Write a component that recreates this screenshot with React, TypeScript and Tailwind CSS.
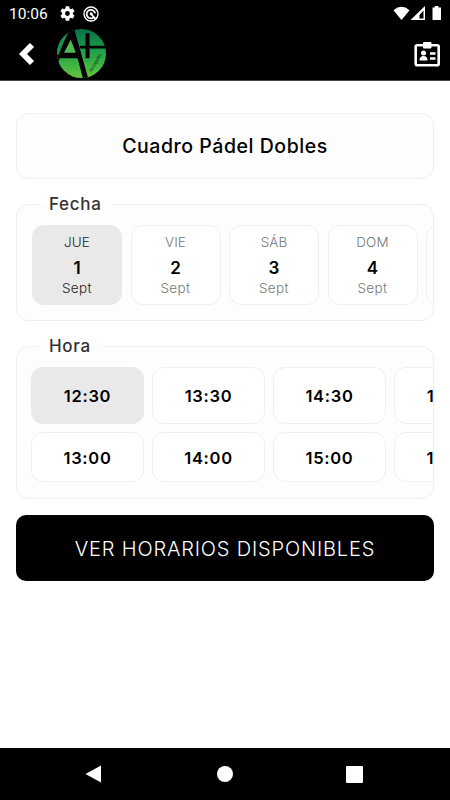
import type { ReactNode } from "react";
import clsx from "clsx";

interface IDay {
    name: string;
    day: number | string;
    month: string;
}

const days: IDay[] = [
    { name: "JUE", day: 1, month: "Sept" },
    { name: "VIE", day: 2, month: "Sept" },
    { name: "SÁB", day: 3, month: "Sept" },
    { name: "DOM", day: 4, month: "Sept" },
    { name: "", day: "", month: "" },
];

const hours = [
    ["12:30", "13:30", "14:30", "15:30"],
    ["13:00", "14:00", "15:00", "16:00"],
];

function StatusBar() {
    return (
        <div className="flex h-[27px] items-center justify-between pl-[9px] pr-[8px]">
            <div className="flex items-center">
                <span className="w-[51px] pt-[2px] font-[Roboto] text-[15.5px] leading-none">10:06</span>
                <svg width="15" height="15" viewBox="2 2 20 20" fill="currentColor">
                    <path d="M19.14 12.94c.04-.3.06-.61.06-.94 0-.32-.02-.64-.07-.94l2.03-1.58a.49.49 0 0 0 .12-.61l-1.92-3.32a.488.488 0 0 0-.59-.22l-2.39.96c-.5-.38-1.03-.7-1.62-.94l-.36-2.54a.484.484 0 0 0-.48-.41h-3.84c-.24 0-.43.17-.47.41l-.36 2.54c-.59.24-1.13.57-1.62.94l-2.39-.96c-.22-.08-.47 0-.59.22L2.74 8.87c-.12.21-.08.47.12.61l2.03 1.58c-.05.3-.09.63-.09.94s.02.64.07.94l-2.03 1.58a.49.49 0 0 0-.12.61l1.92 3.32c.12.22.37.29.59.22l2.39-.96c.5.38 1.03.7 1.62.94l.36 2.54c.05.24.24.41.48.41h3.84c.24 0 .44-.17.47-.41l.36-2.54c.59-.24 1.13-.56 1.62-.94l2.39.96c.22.08.47 0 .59-.22l1.92-3.32c.12-.22.07-.47-.12-.61l-2.01-1.58zM12 15.2A3.2 3.2 0 1 1 12 8.8a3.2 3.2 0 0 1 0 6.4z" />
                </svg>
                <svg className="ml-[8px]" width="16" height="16" viewBox="0 0 16 16" fill="none" stroke="currentColor">
                    <circle cx="8" cy="8" r="7" strokeWidth="1.4" />
                    <path d="M11 11.2A4.3 4.3 0 1 1 12.2 7.4M8 8l4.6 4.8" strokeWidth="1.7" />
                    <circle cx="8.2" cy="7.8" r="1.5" fill="currentColor" stroke="none" />
                </svg>
            </div>
            <svg width="50" height="16" viewBox="0 0 50 16" fill="currentColor">
                <path d="M1.5 4.2Q9.5-2.5 17.5 4.2L9.5 14z" />
                <path d="M33 0v14H18.5zM31.5 4.5l-4 4.5v3.5h4z" fillRule="evenodd" />
                <path d="M42.7 0h3.8v1.500H49V14h-8.500V1.500h2.200z" />
            </svg>
        </div>
    );
}

function Logo() {
    return (
        <svg width="49" height="49" viewBox="9 9 146 146">
            <defs>
                <linearGradient id="logo-green" x1="0" y1="0" x2="0" y2="1">
                    <stop offset="0" stopColor="#087148" />
                    <stop offset="0.5" stopColor="#23a449" />
                    <stop offset="1" stopColor="#66c43e" />
                </linearGradient>
                <clipPath id="logo-clip">
                    <circle cx="82" cy="82" r="73" />
                </clipPath>
            </defs>
            <g clipPath="url(#logo-clip)">
                <rect x="9" y="9" width="146" height="146" fill="url(#logo-green)" />
                {/* A */}
                <path d="M46 8L60 8L102 156H86L73 106L70 96H9V86L42 22z" fill="#000" />
                <path d="M46 10L36 30L14 86H9V8z" fill="#1d9149" />
                <path d="M50 40L65 80H30z" fill="#4fb853" />
                <path d="M9 97L18 97L12 108z" fill="#000" />
                {/* + */}
                <path d="M77 59H155V67H77zM94 22H106V96H94z" fill="#000" />
                <text x="112" y="139" transform="rotate(-60 112 139)" fontSize="15" fill="#083b20" fontFamily="Liberation Sans">Acropolis</text>
            </g>
        </svg>
    );
}

function AppBar() {
    return (
        <div className="flex h-[53px] items-center pl-[19px] pr-[9px]">
            <svg width="16" height="22" viewBox="0 0 16 22" fill="none" stroke="currentColor" strokeWidth="5.8">
                <path d="M13 2L4 11l9 9" />
            </svg>
            <div className="ml-[22px]">
                <Logo />
            </div>
            <svg className="ml-auto" width="28" height="26" viewBox="0 0 28 26" fill="none" stroke="currentColor">
                <rect x="2.7" y="4.2" width="23" height="20" rx="1.5" strokeWidth="2.6" />
                <rect x="10" y="1" width="8.5" height="6.5" rx="1" fill="currentColor" stroke="none" />
                <circle cx="10.5" cy="12" r="2.5" fill="currentColor" stroke="none" />
                <path d="M6.500 19.500c0-3.500 2-4.500 4-4.500s4 1 4 4.500z" fill="currentColor" stroke="none" />
                <path d="M17 12.500H22.500M17 17.500H22.500" strokeWidth="2.4" />
            </svg>
        </div>
    );
}

interface SectionProps {
    title: string;
    className?: string;
    children: ReactNode;
}

function Section({ title, className, children }: SectionProps) {
    return (
        <fieldset className={clsx("min-w-0 rounded-xl border border-[#efefef] bg-[#fdfdfd]", className)}>
            <legend className="ml-[21px] h-[22px] px-[11px] text-[17px] font-medium leading-[23px] tracking-[0.7px] text-[#333]">
                {title}
            </legend>
            {children}
        </fieldset>
    );
}

export default function App() {
    return (
        <div className="flex h-[800px] w-[450px] flex-col overflow-hidden bg-white font-[Inter,sans-serif] text-black">
            <header className="h-[81px] border-b border-[#444] bg-black text-white">
                <StatusBar />
                <AppBar />
            </header>

            <main className="flex flex-1 flex-col px-4 pt-[32px]">
                <div className="flex h-[66px] w-[418px] items-center justify-center rounded-xl border border-[#efefef] bg-[#fdfdfd] pt-[2px] text-[19.5px] font-medium tracking-[0.55px]">
                    Cuadro Pádel Dobles
                </div>

                {/* Fecha */}
                <Section title="Fecha" className="mt-[14px] h-[128px] w-[418px]">
                    <div className="flex gap-[8.5px] overflow-hidden pl-[15px] pt-[10px]">
                        {days.map((d, i) => (
                            <button
                                key={i}
                                className={clsx(
                                    "flex h-[80px] w-[90px] shrink-0 flex-col items-center rounded-xl border pt-[7px]",
                                    i === 0 ? "border-[#e9e9e9] bg-[#e9e9e9] text-[#222]" : "border-[#efefef] bg-white text-[#777]"
                                )}
                            >
                                <span className="text-[13.5px] font-light leading-[19px] tracking-[0.1px]">{d.name}</span>
                                <span className="mt-[5px] text-[17px] font-semibold leading-[22px] text-black">{d.day}</span>
                                <span className="text-[13.5px] font-light leading-[18px] tracking-[0.4px]">{d.month}</span>
                            </button>
                        ))}
                    </div>
                </Section>

                {/* Hora */}
                <Section title="Hora" className="mt-[14px] h-[164px] w-[418px]">
                    <div className="flex flex-col gap-2 overflow-hidden pl-[14px] pt-[10px]">
                        {hours.map((row, r) => (
                            <div key={r} className="flex gap-2">
                                {row.map((hour, i) => (
                                    <button
                                        key={hour}
                                        className={clsx(
                                            "w-[113px] shrink-0 rounded-xl border text-[16.5px] font-semibold tracking-[0.7px]",
                                            r === 0 ? "h-[57px] pt-[2px]" : "h-[50px] pt-[2px]",
                                            r === 0 && i === 0 ? "border-[#e9e9e9] bg-[#e9e9e9]" : "border-[#efefef] bg-white"
                                        )}
                                    >
                                        {hour}
                                    </button>
                                ))}
                            </div>
                        ))}
                    </div>
                </Section>

                <button className="mt-[16px] h-[66px] w-[418px] rounded-[10px] bg-black pt-[1px] text-[20px] font-light tracking-[0.83px] text-white">
                    VER HORARIOS DISPONIBLES
                </button>
            </main>

            <nav className="flex h-[52px] items-center bg-black pl-[85px] text-white">
                <svg width="17" height="18" viewBox="0 0 17 18" fill="currentColor">
                    <path d="M16 .5v17L.5 9z" />
                </svg>
                <div className="ml-[115px] size-4 rounded-full bg-white" />
                <div className="ml-[113px] size-[17px] rounded-[1px] bg-white" />
            </nav>
        </div>
    );
}
